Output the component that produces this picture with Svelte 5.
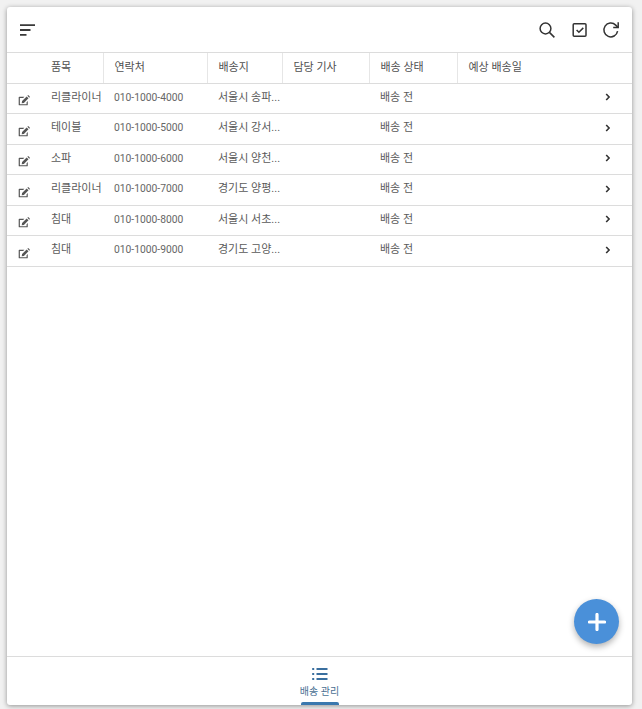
<script>
  const COLUMNS = [
    { label: '품목', width: 63 },
    { label: '연락처', width: 104 },
    { label: '배송지', width: 75 },
    { label: '담당 기사', width: 87 },
    { label: '배송 상태', width: 88 },
    { label: '예상 배송일', width: 134 }
  ];

  const ORDERS = [
    { item: '리클라이너', phone: '010-1000-4000', address: '서울시 송파...' },
    { item: '테이블', phone: '010-1000-5000', address: '서울시 강서...' },
    { item: '소파', phone: '010-1000-6000', address: '서울시 양천...' },
    { item: '리클라이너', phone: '010-1000-7000', address: '경기도 양평...' },
    { item: '침대', phone: '010-1000-8000', address: '서울시 서초...' },
    { item: '침대', phone: '010-1000-9000', address: '경기도 고양...' }
  ];
</script>

<div class="page">
  <div class="card">
    <header>
      <svg class="menu" viewBox="0 0 16 12" width="16" height="12">
        <path d="M0 1.2h15M0 6h10.5M0 10.8h6.5" />
      </svg>
      <div class="actions">
        <svg viewBox="0 0 16 16" width="16" height="16">
          <circle cx="6.5" cy="6.5" r="5.4" />
          <path d="M10.4 10.4l5 5" />
        </svg>
        <svg viewBox="0 0 16 16" width="16" height="16">
          <rect x="1.2" y="1.7" width="12.8" height="12.6" rx="1" />
          <path d="M4.6 8l2.3 2.3 4.4-4.4" />
        </svg>
        <svg class="refresh" viewBox="0 0 18 18" width="18" height="18">
          <path d="M15.6 10.2a6.9 6.9 0 1 1-1.9-6.1l2 2" />
          <path d="M16.2 1.2v5.2h-5" />
        </svg>
      </div>
    </header>

    <table>
      <colgroup>
        <col class="edit-col" />
        {#each COLUMNS as column}
          <col style="width: {column.width}px" />
        {/each}
        <col class="arrow-col" />
      </colgroup>
      <thead>
        <tr>
          <th></th>
          {#each COLUMNS as column, i}
            <th class:divided={i < COLUMNS.length - 1}>{column.label}</th>
          {/each}
          <th></th>
        </tr>
      </thead>
      <tbody>
        {#each ORDERS as order}
          <tr>
            <td class="edit">
              <svg viewBox="0 0 13 12" width="12" height="11">
                <path d="M10.6 6.6v3.9a.8.8 0 0 1-.8.8H1.5a.8.8 0 0 1-.8-.8V2.7a.8.8 0 0 1 .8-.8h5.4l-1.3 1.3H2v6.9h7.3V7.9z" />
                <path d="M4.4 6.6l5-5 2 2-5 5-2.4.4zM10.2.9l.5-.5a.6.6 0 0 1 .8 0l1.2 1.2a.6.6 0 0 1 0 .8l-.5.5z" />
              </svg>
            </td>
            <td>{order.item}</td>
            <td class="phone">{order.phone}</td>
            <td>{order.address}</td>
            <td></td>
            <td>배송 전</td>
            <td></td>
            <td class="arrow">
              <svg viewBox="0 0 6 8" width="6" height="8">
                <path d="M1.2 1l2.9 3-2.9 3" />
              </svg>
            </td>
          </tr>
        {/each}
      </tbody>
    </table>

    <div class="spacer"></div>

    <button class="fab" type="button" aria-label="추가">
      <svg viewBox="0 0 18 18" width="18" height="18">
        <path d="M9 1.5v15M1.5 9h15" />
      </svg>
    </button>

    <nav>
      <svg viewBox="0 0 16 14" width="16" height="14">
        <path class="lines" d="M4.5 2h11M4.5 7h11M4.5 12h11" />
        <path class="dots" d="M.2 2h2M.2 7h2M.2 12h2" />
      </svg>
      <span>배송 관리</span>
      <div class="indicator"></div>
    </nav>
  </div>
</div>

<style>
  :global(body) {
    margin: 0;
    background: #f1f1f1;
  }

  .page {
    box-sizing: border-box;
    height: 709px;
    padding: 7px 10px 4px 7px;
    font-family: Roboto, 'Noto Sans CJK KR', sans-serif;
    color: #444;
  }

  .card {
    position: relative;
    display: flex;
    flex-direction: column;
    height: 100%;
    background: white;
    border-radius: 3px;
    box-shadow: 0 1px 5px rgba(0, 0, 0, 0.4);
    overflow: hidden;
  }

  header {
    display: flex;
    justify-content: space-between;
    align-items: center;
    box-sizing: border-box;
    height: 46px;
    padding: 0 12px 0 13px;
    border-bottom: 1px solid #dcdcdc;
  }

  .menu path {
    fill: none;
    stroke: #3a3a3a;
    stroke-width: 1.8;
  }

  .actions {
    display: flex;
    align-items: center;
    gap: 17px;
  }

  .actions svg {
    fill: none;
    stroke: #333;
    stroke-width: 1.5;
  }

  .actions .refresh {
    margin-left: -3px;
  }

  table {
    width: 100%;
    table-layout: fixed;
    border-collapse: collapse;
    font-size: 11px;
    line-height: 14px;
  }

  .edit-col {
    width: 33px;
  }

  .arrow-col {
    width: 41px;
  }

  th {
    box-sizing: border-box;
    height: 30px;
    padding: 0 0 0 11px;
    font-weight: 400;
    text-align: left;
    color: #505050;
    border-bottom: 1px solid #dcdcdc;
  }

  th.divided {
    border-right: 1px solid #e6e6e6;
  }

  td {
    box-sizing: border-box;
    height: 30.5px;
    padding: 0 0 1px 11px;
    white-space: nowrap;
    color: #5a5a5a;
    border-bottom: 1px solid #dcdcdc;
  }

  .phone {
    font-size: 10.3px;
    color: #666;
  }

  td.edit {
    padding: 5px 0 0 11px;
    line-height: 0;
  }

  .edit svg {
    fill: #555;
    stroke: none;
  }

  td.arrow {
    padding: 0 0 2px 14px;
    line-height: 0;
  }

  .arrow svg {
    fill: none;
    stroke: #333;
    stroke-width: 1.6;
  }

  .spacer {
    flex: 1;
  }

  .fab {
    position: absolute;
    right: 13px;
    bottom: 61px;
    display: flex;
    align-items: center;
    justify-content: center;
    width: 45px;
    height: 45px;
    padding: 0;
    border: none;
    border-radius: 50%;
    background: #4a90d9;
    box-shadow: 0 3px 6px rgba(0, 0, 0, 0.3);
  }

  .fab svg {
    fill: none;
    stroke: white;
    stroke-width: 3.2;
    stroke-linecap: round;
  }

  nav {
    display: flex;
    flex-direction: column;
    align-items: center;
    box-sizing: border-box;
    height: 49px;
    padding-top: 10px;
    border-top: 1px solid #dcdcdc;
    color: #4a6f93;
    font-size: 10px;
    line-height: 14px;
  }

  nav span {
    margin-top: 4px;
  }

  nav svg {
    fill: none;
    stroke: #3a6f9f;
    stroke-width: 1.8;
  }

  .indicator {
    width: 38px;
    height: 3px;
    margin-top: auto;
    background: #3a78ae;
    border-radius: 2px 2px 0 0;
  }
</style>
